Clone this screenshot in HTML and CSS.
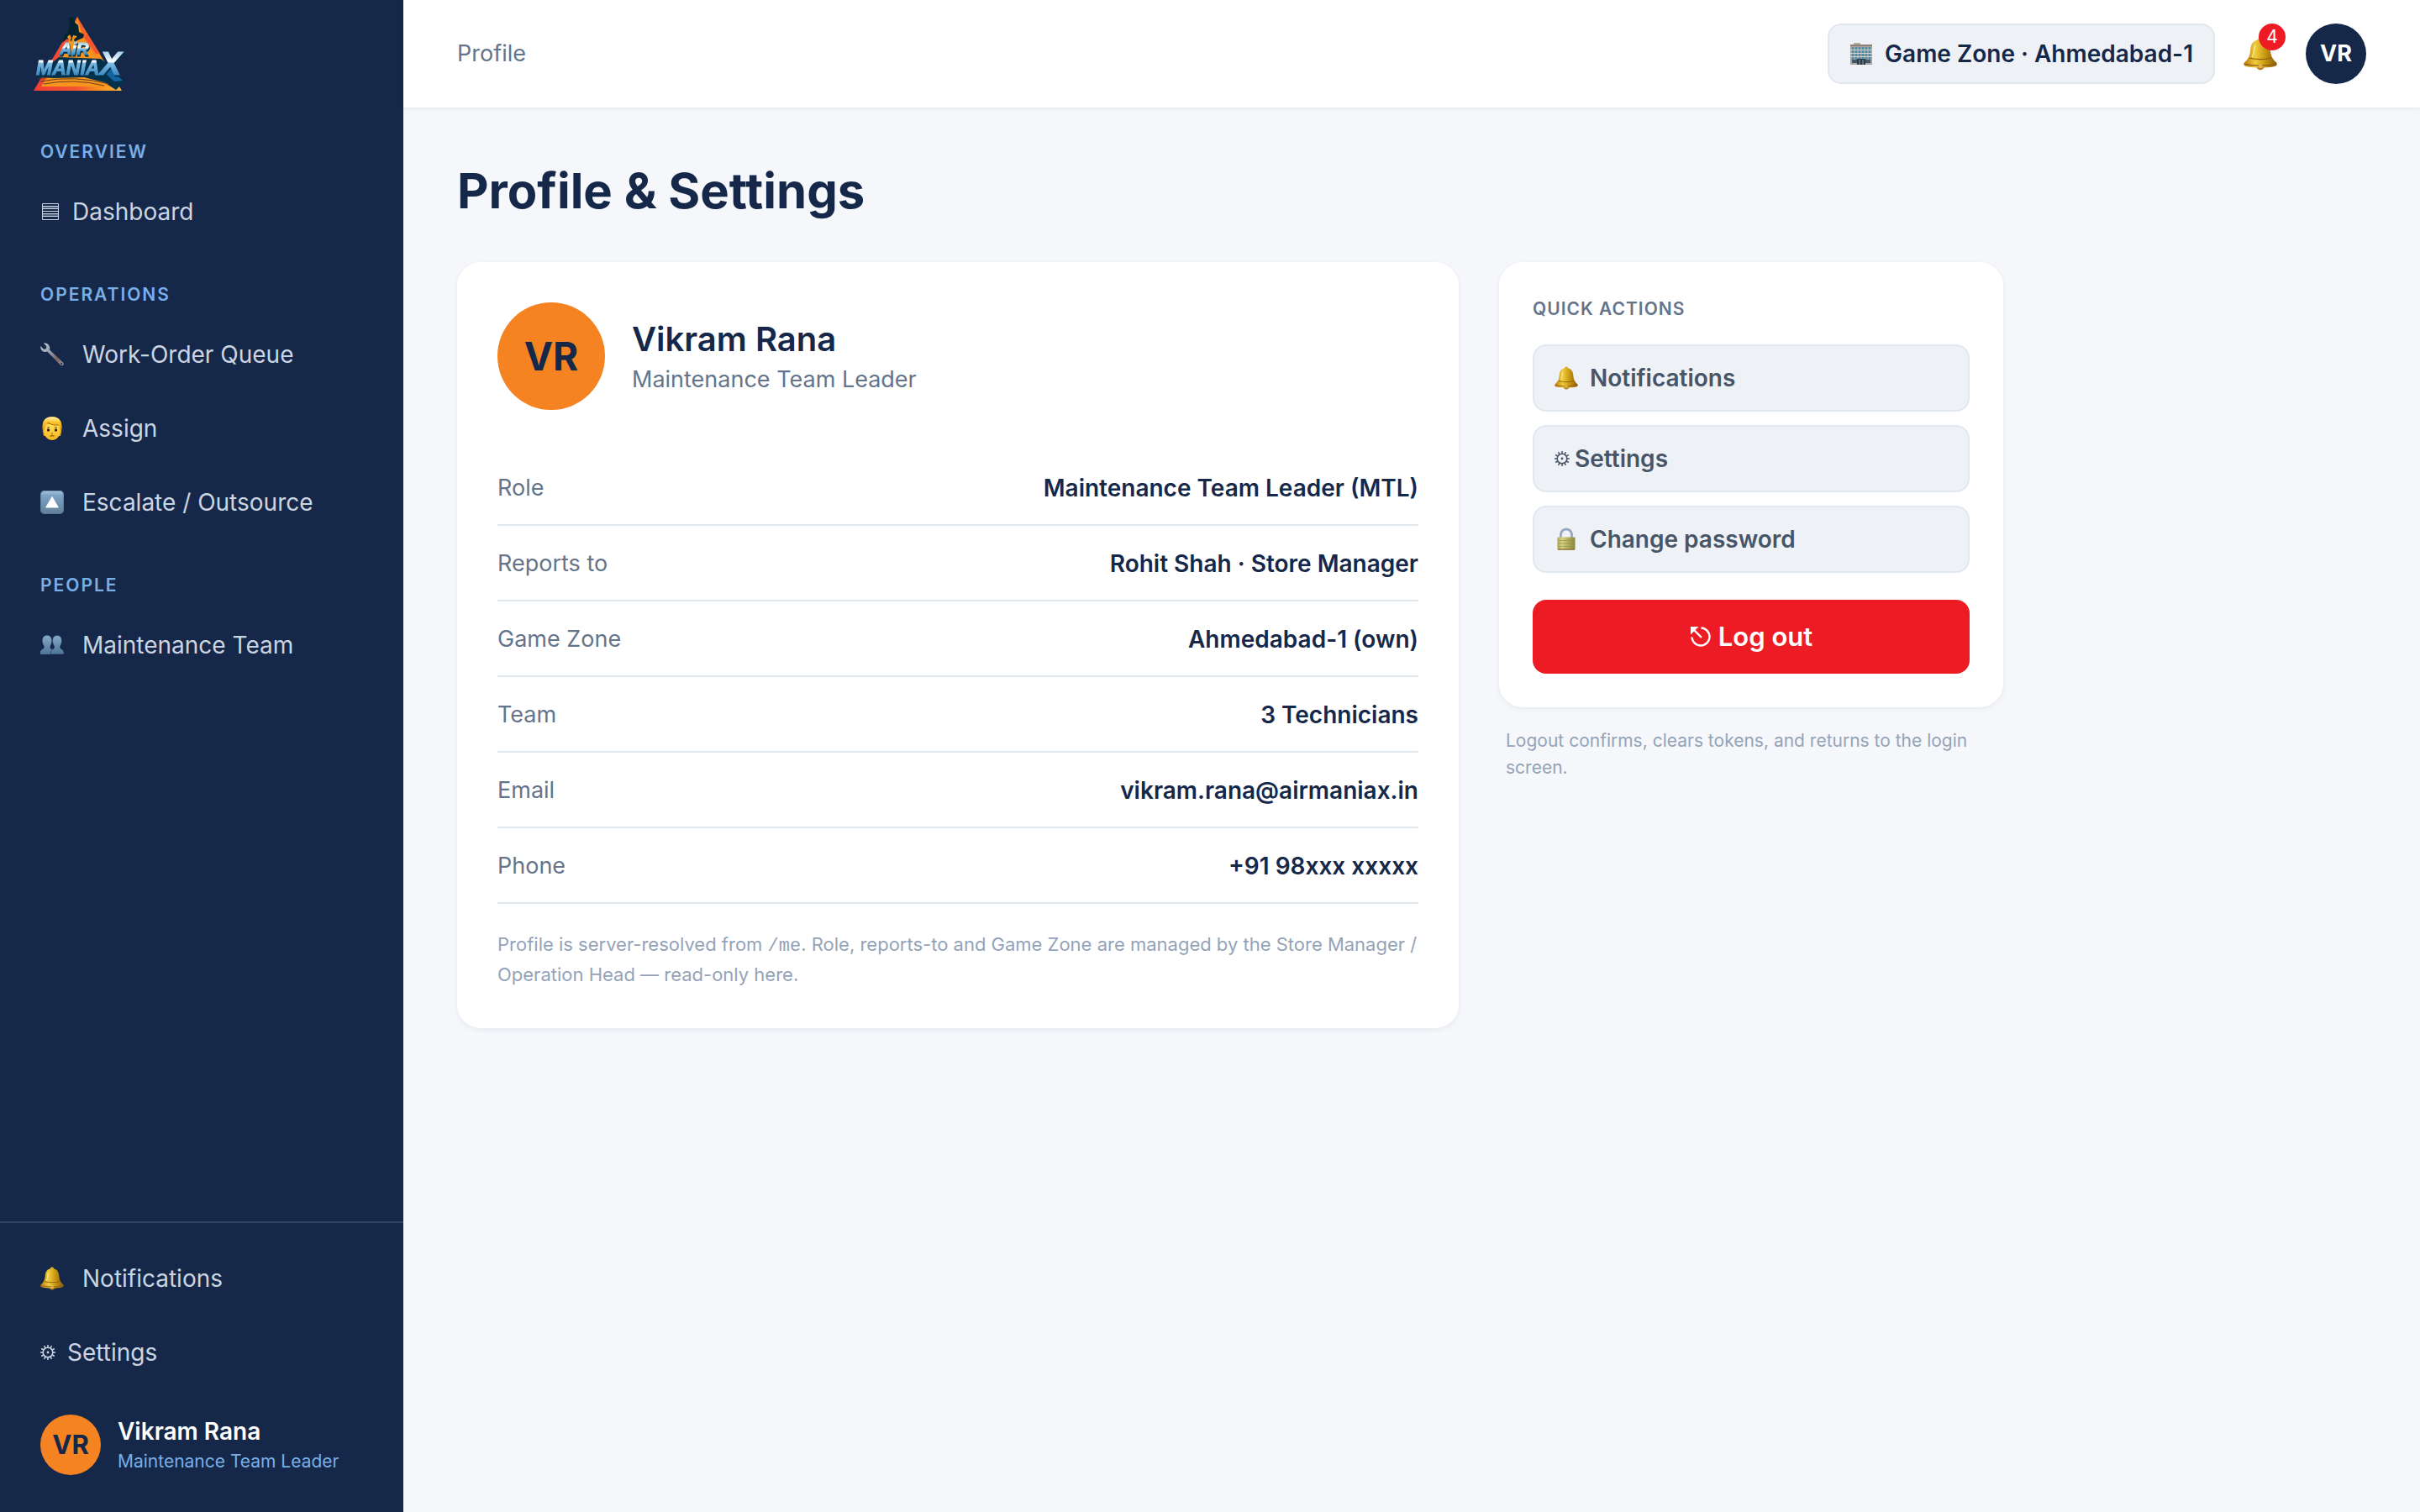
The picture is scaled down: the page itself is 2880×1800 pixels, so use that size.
FILE: index.html
```html
<!DOCTYPE html>
<html lang="en">
<head>
    <meta charset="UTF-8">
    <meta name="viewport" content="width=device-width, initial-scale=1.0">
    <title>Profile &amp; Settings - Air Maniax</title>
    <link rel="stylesheet" href="styles.css">
</head>
<body>
    <!-- Shared icons -->
    <svg class="sprite" aria-hidden="true">
        <defs>
            <linearGradient id="gold" x1="0" x2="1" y1="0" y2="0">
                <stop offset="0" stop-color="#b8790f"/>
                <stop offset=".35" stop-color="#f0cc3c"/>
                <stop offset=".65" stop-color="#c8960f"/>
                <stop offset="1" stop-color="#8a5a0c"/>
            </linearGradient>
            <linearGradient id="steel" x1="0" x2="0" y1="0" y2="1">
                <stop offset="0" stop-color="#86aac8"/>
                <stop offset="1" stop-color="#4e7396"/>
            </linearGradient>
            <linearGradient id="tile" x1="0" x2="0" y1="0" y2="1">
                <stop offset="0" stop-color="#a9c8e2"/>
                <stop offset=".2" stop-color="#7ea3c4"/>
                <stop offset="1" stop-color="#607f9b"/>
            </linearGradient>
            <linearGradient id="face" x1="0" x2="0" y1="0" y2="1">
                <stop offset="0" stop-color="#ffe05a"/>
                <stop offset="1" stop-color="#f7b51c"/>
            </linearGradient>
            <linearGradient id="hair" x1="0" x2="0" y1="0" y2="1">
                <stop offset="0" stop-color="#fff3b0"/>
                <stop offset=".4" stop-color="#fcc62c"/>
                <stop offset="1" stop-color="#e0930f"/>
            </linearGradient>
            <linearGradient id="wrench" x1="0" x2="1" y1="0" y2="1">
                <stop offset="0" stop-color="#c3ced8"/>
                <stop offset=".45" stop-color="#8d99a6"/>
                <stop offset=".7" stop-color="#7d625c"/>
                <stop offset="1" stop-color="#8d939c"/>
            </linearGradient>
            <linearGradient id="brass" x1="0" x2="1" y1="0" y2="0">
                <stop offset="0" stop-color="#a9a552"/>
                <stop offset=".25" stop-color="#d8d487"/>
                <stop offset=".6" stop-color="#b5af5c"/>
                <stop offset="1" stop-color="#8c8740"/>
            </linearGradient>
        </defs>
        <symbol id="i-bell" viewBox="0 0 28 28">
            <ellipse cx="14" cy="24.6" rx="3.2" ry="2.8" fill="#b27a1c"/>
            <path d="M14 .6c1.300 0 2 .7 2 1.700 4 .9 5.800 3.700 6.200 7.700.5 5.200 1.200 7.800 5.200 11.400.8 1 .4 2.400-1 2.900-3.400 1-8 1.300-12.400 1.300S5 25.300 1.600 24.300C.2 23.800-.2 22.400.6 21.400c4-3.600 4.700-6.200 5.200-11.400.4-4 2.200-6.800 6.200-7.700 0-1 .7-1.700 2-1.700z" fill="url(#gold)"/>
            <path d="M5 17.500c5 1.600 13 1.600 18 0M1 22.500c6 1.800 20 1.800 26 0" fill="none" stroke="#8f5f0d" stroke-width=".9"/>
            <path d="M9.500 7c-.8 3-.8 7-2.200 10" fill="none" stroke="#fff2a0" stroke-width="1.300" opacity=".7"/>
            <circle cx="14" cy="24.300" r="1.800" fill="#e0b04c"/>
        </symbol>
        <symbol id="i-gear" viewBox="0 0 18 18">
            <circle cx="9" cy="9" r="5.800" fill="none" stroke="currentColor" stroke-width="1.600"/>
            <circle cx="9" cy="9" r="1.400" fill="currentColor"/>
            <path d="M9 0v3M9 15v3M0 9h3M15 9h3M4.500 1.200 6 3.800M12 14.200l1.500 2.600M1.200 4.500 3.800 6M14.200 12l2.600 1.500M1.200 13.500 3.800 12M14.200 6l2.600-1.500M4.500 16.800 6 14.200M12 3.800l1.500-2.600" stroke="currentColor" stroke-width="1.500"/>
        </symbol>
    </svg>

    <div class="app">
        <aside class="sidebar">
            <a class="brand" href="#" aria-label="Air Maniax">
                <svg class="brand-logo" viewBox="0 0 108 88">
                    <defs>
                        <linearGradient id="edge" x1="0" x2="1" y1="0" y2="0">
                            <stop offset="0" stop-color="#ef3e36"/>
                            <stop offset=".5" stop-color="#f4552f"/>
                            <stop offset=".75" stop-color="#f7941d"/>
                            <stop offset="1" stop-color="#fbb040"/>
                        </linearGradient>
                        <linearGradient id="ice" x1="0" x2="0" y1="0" y2="1">
                            <stop offset=".1" stop-color="#8cc4ea"/>
                            <stop offset=".45" stop-color="#ffffff"/>
                            <stop offset=".5" stop-color="#7dbbe4"/>
                            <stop offset=".9" stop-color="#2a7db8"/>
                        </linearGradient>
                    </defs>
                    <path d="M52 0 105 88H0z" fill="url(#edge)"/>
                    <path d="M52 0 58 22 82 62 95 83H9L46 22z" fill="#f7941d"/>
                    <path d="M64 20 79 44 74 44 60 24z" fill="#f4552f"/>
                    <!-- skater -->
                    <path d="M42 1 46 0l3 3v4l4 3 1 8 6 3-1 4-7 3-3 2-1-3 4-4-5-1-2 7-5-3-6 5 3-9 4-4 2-9z" fill="#04222f"/>
                    <path d="M40 24l3-3 2 4-2 4z" fill="#f7941d"/>
                    <path d="M6 68 30 48 80 50 96 62 107 78 98 87 84 78 60 72 24 73 4 72z" fill="#03304a"/>
                    <path d="M8 77q40-8 82 3M12 80q36-7 72 2M6 74l14-2" fill="none" stroke="#6b3f1c"/>
                    <path d="M90 60l16 16-10 1-10-9z" fill="#1265a3"/>
                    <text class="logo-text" x="31" y="45" font-size="20" fill="url(#ice)" stroke="url(#ice)">AiR</text>
                    <text class="logo-text" x="3" y="69" font-size="23" fill="url(#ice)" stroke="url(#ice)">MANIA<tspan font-size="39">X</tspan></text>
                </svg>
            </a>

            <nav class="nav">
                <h2 class="nav-label">Overview</h2>
                <a class="nav-item" href="#">
                    <svg class="icon-grid" viewBox="0 0 24 24" fill="none" stroke="currentColor">
                        <path d="M2.500 2.500h19v19h-19z"/>
                        <path d="M3 5.500h18M3 8.500h18M3 11.500h18M3 14.500h18M3 17.500h18"/>
                        <path d="M3 7h18M3 16h18" stroke-width="3" opacity=".35"/>
                    </svg>
                    Dashboard
                </a>

                <h2 class="nav-label">Operations</h2>
                <a class="nav-item" href="#">
                    <svg class="icon" viewBox="0 0 28 28">
                        <path d="M5.500.6 3.800.2l3.600 4.200-.6 2.800-3 .5L.4 4.100C-.1 7.500 1.600 10.600 5 11c1.200.1 2.200-.1 3.200-.6l15.600 16c2.500 2.200 5.200-.6 3.300-2.900L11 8.500C12.300 4.500 9.500.6 5.500.6z" fill="url(#wrench)"/>
                        <circle cx="25.200" cy="25" r="1.100" fill="#16284a"/>
                    </svg>
                    Work-Order Queue
                </a>
                <a class="nav-item" href="#">
                    <svg class="icon" viewBox="0 0 28 28">
                        <path d="M4 23C1 12 2 0 14 0s13 12 10 23z" fill="#e39a13"/>
                        <path d="M4.500 9h19v9c0 6-5 10-9.500 10s-9.500-4-9.500-10z" fill="url(#face)"/>
                        <path d="M3 15C1.500 6 5 .3 14 .3S26.500 6 25 15l-2 1c0-3 0-4-1.500-6C16 10.500 11 9 9 6.500 8 9.500 5.500 10 5 16z" fill="url(#hair)"/>
                        <path d="M9 6.500c2 2.500 7 4 12.500 3.500" fill="none" stroke="#a8680c"/>
                        <circle cx="9.500" cy="16" r="1.700" fill="#40260c"/>
                        <circle cx="18.500" cy="16" r="1.700" fill="#40260c"/>
                        <path d="M8 13.300l3-.8M20 13.300l-3-.8M11.500 23.200q2.500-1.200 5 0M13 20h2" fill="none" stroke="#8a5510" stroke-width="1.100"/>
                    </svg>
                    Assign
                </a>
                <a class="nav-item" href="#">
                    <svg class="icon" viewBox="0 0 28 28">
                        <rect width="28" height="28" rx="5" fill="url(#tile)"/>
                        <rect x=".5" y=".5" width="27" height="27" rx="4.500" fill="none" stroke="#4f7190" opacity=".6"/>
                        <path d="M14 7.500 21.300 20H6.700z" fill="#fff" stroke="#fff" stroke-linejoin="round"/>
                    </svg>
                    Escalate / Outsource
                </a>

                <h2 class="nav-label">People</h2>
                <a class="nav-item" href="#">
                    <svg class="icon" viewBox="0 0 28 28">
                        <path d="M8 2.500c4 0 5.800 3 5.500 7-.2 3-1.500 4.500-2 6.500-.2 3 4.500 3 4.500 6.500V25H0v-2.500C0 19 5 19 4.700 16c-.5-2-2-3.500-2.200-6.500-.3-4 1.500-7 5.500-7z" fill="url(#steel)"/>
                        <path d="M20 2.500c4 0 5.800 3 5.500 7-.2 3-1.500 4.500-2 6.500-.2 3 4.500 3 4.500 6.500V25H12.500v-2.500c0-3.500 4.500-3.500 4.200-6.500-.5-2-2-3.500-2.200-6.500-.3-4 1.500-7 5.500-7z" fill="url(#steel)" stroke="#16284a" stroke-width=".5"/>
                    </svg>
                    Maintenance Team
                </a>
            </nav>

            <div class="sidebar-footer">
                <a class="nav-item" href="#"><svg class="icon"><use href="#i-bell"/></svg>Notifications</a>
                <a class="nav-item" href="#"><svg class="icon-gear"><use href="#i-gear"/></svg>Settings</a>
                <div class="user">
                    <span class="avatar avatar-orange">VR</span>
                    <div class="user-text">
                        <div class="user-name">Vikram Rana</div>
                        <div class="user-role">Maintenance Team Leader</div>
                    </div>
                </div>
            </div>
        </aside>

        <div class="main">
            <header class="topbar">
                <span class="crumb">Profile</span>
                <div class="topbar-right">
                    <button class="zone" type="button">
                        <svg class="icon" viewBox="0 0 28 28">
                            <path d="M5 1h8v3H5z" fill="#b5aca2"/>
                            <path d="M1 3h26v24H1z" fill="#a9a59f"/>
                            <path d="M1 3h26v2H1z" fill="#8d7f74"/>
                            <path d="M4 6v16M8 6v16M12 6v16M16 6v16M20 6v16M24 6v16" stroke="#4b8fae" stroke-width="2.400"/>
                            <path d="M1 9.500h26M1 13.500h26M1 17.500h26" stroke="#d6d2cc"/>
                            <path d="M3 21h6v4H3zM19 21h6v4h-6z" fill="#41596a"/>
                            <path d="M9 20h10v7H9z" fill="#2d3a44"/>
                            <path d="M12 21v6M16 21v6" stroke="#8ba0ad"/>
                        </svg>
                        Game Zone · Ahmedabad-1
                    </button>
                    <button class="bell" type="button" aria-label="Notifications">
                        <svg class="icon-bell"><use href="#i-bell"/></svg>
                        <span class="badge">4</span>
                    </button>
                    <span class="avatar avatar-navy">VR</span>
                </div>
            </header>

            <main class="content">
                <h1>Profile &amp; Settings</h1>

                <div class="grid">
                    <section class="card profile">
                        <div class="profile-head">
                            <span class="avatar avatar-orange avatar-lg">VR</span>
                            <div>
                                <h2 class="profile-name">Vikram Rana</h2>
                                <div class="profile-role">Maintenance Team Leader</div>
                            </div>
                        </div>
                        <dl class="details">
                            <div class="row"><dt>Role</dt><dd>Maintenance Team Leader (MTL)</dd></div>
                            <div class="row"><dt>Reports to</dt><dd>Rohit Shah · Store Manager</dd></div>
                            <div class="row"><dt>Game Zone</dt><dd>Ahmedabad-1 (own)</dd></div>
                            <div class="row"><dt>Team</dt><dd>3 Technicians</dd></div>
                            <div class="row"><dt>Email</dt><dd>vikram.rana@airmaniax.in</dd></div>
                            <div class="row"><dt>Phone</dt><dd>+91 98xxx xxxxx</dd></div>
                        </dl>
                        <p class="note">Profile is server-resolved from <code>/me</code>. Role, reports-to and Game Zone are managed by the Store Manager / Operation Head — read-only here.</p>
                    </section>

                    <div>
                        <section class="card actions">
                            <h2 class="card-label">Quick actions</h2>
                            <button class="action" type="button"><svg class="icon"><use href="#i-bell"/></svg>Notifications</button>
                            <button class="action" type="button"><svg class="icon-gear"><use href="#i-gear"/></svg>Settings</button>
                            <button class="action" type="button">
                                <svg class="icon" viewBox="0 0 28 28">
                                    <path d="M7.500 12V8.500a6.500 6.500 0 0 1 13 0V12" fill="none" stroke="#a3b1bd" stroke-width="3"/>
                                    <path d="M7 9c0-9 14-9 14 0" fill="none" stroke="#7f9fc4" stroke-width="1"/>
                                    <rect x="3.500" y="11.500" width="21" height="15" rx="1" fill="url(#brass)"/>
                                    <path d="M4 15.500h20M4 19h20M4 22.500h20" stroke="#8f8a42" stroke-width=".6"/>
                                    <path d="M4 26h20" stroke="#8a6d30" stroke-width="1.400"/>
                                </svg>
                                Change password
                            </button>
                            <button class="logout" type="button">
                                <svg class="icon-logout" viewBox="0 0 26 26">
                                    <path d="M13.500 2.500a10.500 10.500 0 1 1-11 11" fill="none" stroke="currentColor" stroke-width="2.400"/>
                                    <path d="M5 5l9 9" stroke="currentColor" stroke-width="2.400"/>
                                    <path d="M1 1h9.500L1 10.500z" fill="currentColor"/>
                                </svg>
                                Log out
                            </button>
                        </section>
                        <p class="hint">Logout confirms, clears tokens, and returns to the login screen.</p>
                    </div>
                </div>
            </main>
        </div>
    </div>
</body>
</html>
```

FILE: styles.css
```css
:root {
    --navy: #16284a;
    --orange: #f58322;
    --red: #ed1c24;
    --sky: #79aee6;
    --bg: #f5f7fb;
    --field: #eef1f6;
    --border: #e2e8f0;
    --slate: #64748b;
    --muted: #94a3b8;
}

* {
    box-sizing: border-box;
}

body {
    margin: 0;
    background: var(--bg);
    color: var(--navy);
    font-family: "Inter", sans-serif;
    font-size: 28px;
    line-height: 36px;
}

h1,
h2,
p,
dl,
dd {
    margin: 0;
}

a {
    color: inherit;
    text-decoration: none;
}

button {
    font: inherit;
    color: inherit;
    border: none;
    cursor: pointer;
}

.sprite {
    position: absolute;
    width: 0;
    height: 0;
}

.app {
    display: flex;
    min-height: 100vh;
}

/* Icons */
.icon,
.icon-grid,
.icon-gear,
.icon-logout {
    flex: none;
}

.icon {
    width: 28px;
    height: 28px;
    margin-right: 8px;
}

.icon-grid {
    width: 24px;
    height: 24px;
}

.icon-gear {
    width: 18px;
    height: 18px;
}

.icon-logout {
    width: 26px;
    height: 26px;
}

/* Sidebar */
.sidebar {
    display: flex;
    flex-direction: column;
    flex: none;
    width: 480px;
    background: var(--navy);
    color: #cbd5e1;
}

.brand {
    display: block;
    padding: 20px 40px 18px;
}

.brand-logo {
    display: block;
    width: 108px;
    height: 88px;
    overflow: visible;
}

.logo-text {
    font-family: "Liberation Sans", sans-serif;
    font-weight: 700;
    font-style: italic;
    filter: drop-shadow(1px 2px 0 #03304a);
}

.nav {
    flex: 1;
}

.nav-label {
    padding: 41px 48px 13px;
    color: var(--sky);
    font-size: 21px;
    font-weight: 600;
    line-height: 28px;
    letter-spacing: 2px;
    text-transform: uppercase;
}

.nav-item {
    display: flex;
    align-items: center;
    gap: 14px;
    height: 88px;
    padding: 0 48px;
}

.sidebar-footer {
    padding: 22px 0 42px;
    border-top: 2px solid rgba(255, 255, 255, 0.12);
}

.user {
    display: flex;
    align-items: center;
    gap: 20px;
    padding: 28px 48px 0;
}

.user-text {
    padding-top: 4px;
}

.user-name {
    color: #fff;
    font-weight: 600;
}

.user-role {
    color: var(--sky);
    font-size: 21px;
    white-space: nowrap;
}

.avatar {
    display: flex;
    align-items: center;
    justify-content: center;
    flex: none;
    width: 72px;
    height: 72px;
    border-radius: 50%;
    font-weight: 700;
}

.avatar-orange {
    background: var(--orange);
    color: var(--navy);
    font-size: 31px;
}

.avatar-navy {
    background: var(--navy);
    color: #fff;
    font-size: 27px;
}

.avatar-lg {
    width: 128px;
    height: 128px;
    font-size: 46px;
}

/* Top bar */
.main {
    flex: 1;
    min-width: 0;
}

.topbar {
    display: flex;
    align-items: center;
    justify-content: space-between;
    height: 128px;
    padding: 0 64px;
    background: #fff;
    box-shadow: 0 2px 4px rgba(22, 40, 74, 0.06);
}

.crumb {
    color: var(--slate);
    font-size: 27px;
}

.topbar-right {
    display: flex;
    align-items: center;
    gap: 28px;
}

.zone {
    display: flex;
    align-items: center;
    gap: 6px;
    height: 72px;
    padding: 0 24px;
    background: var(--field);
    border: 2px solid var(--border);
    border-radius: 16px;
    font-weight: 600;
}

.bell {
    position: relative;
    width: 52px;
    height: 72px;
    padding: 0;
    background: none;
}

.icon-bell {
    display: block;
    width: 40px;
    height: 40px;
    margin: 0 auto;
}

.badge {
    position: absolute;
    top: 0;
    right: -4px;
    width: 32px;
    height: 32px;
    border-radius: 50%;
    background: var(--red);
    color: #fff;
    font-size: 21px;
    line-height: 32px;
    text-align: center;
}

/* Page */
.content {
    padding: 60px 64px;
}

h1 {
    margin-bottom: 46px;
    font-size: 58px;
    font-weight: 700;
    line-height: 78px;
}

.grid {
    display: grid;
    grid-template-columns: minmax(0, 1fr) 600px;
    align-items: start;
    gap: 48px;
    max-width: 1840px;
}

.card {
    background: #fff;
    border-radius: 28px;
    box-shadow: 0 2px 6px rgba(22, 40, 74, 0.07);
}

.profile {
    padding: 48px 48px 46px;
}

.profile-head {
    display: flex;
    align-items: center;
    gap: 32px;
    margin-bottom: 48px;
}

.profile-name {
    font-size: 40px;
    font-weight: 600;
    line-height: 56px;
}

.profile-role {
    color: var(--slate);
    font-size: 27px;
    line-height: 40px;
}

.row {
    display: flex;
    align-items: center;
    justify-content: space-between;
    height: 90px;
    padding-top: 2px;
    border-bottom: 2px solid var(--border);
}

.row dt {
    color: var(--slate);
    font-size: 27px;
}

.row dd {
    font-weight: 600;
}

.note {
    margin-top: 30px;
    color: var(--muted);
    font-size: 22px;
}

.note code {
    font-family: "Liberation Mono", monospace;
    font-size: 22px;
    line-height: 1;
}

.actions {
    display: flex;
    flex-direction: column;
    gap: 16px;
    padding: 40px;
}

.card-label {
    margin-bottom: 10px;
    color: var(--slate);
    font-size: 21px;
    font-weight: 600;
    line-height: 32px;
    letter-spacing: 1px;
    text-transform: uppercase;
}

.action {
    display: flex;
    align-items: center;
    gap: 6px;
    height: 80px;
    padding: 0 24px;
    background: var(--field);
    border: 2px solid var(--border);
    border-radius: 16px;
    color: #475569;
    font-weight: 600;
}

.logout {
    display: flex;
    align-items: center;
    justify-content: center;
    gap: 8px;
    height: 88px;
    margin-top: 16px;
    background: var(--red);
    border-radius: 16px;
    color: #fff;
    font-size: 31px;
    font-weight: 600;
}

.hint {
    padding: 24px 8px 0;
    color: var(--muted);
    font-size: 21px;
    line-height: 32px;
}
```
